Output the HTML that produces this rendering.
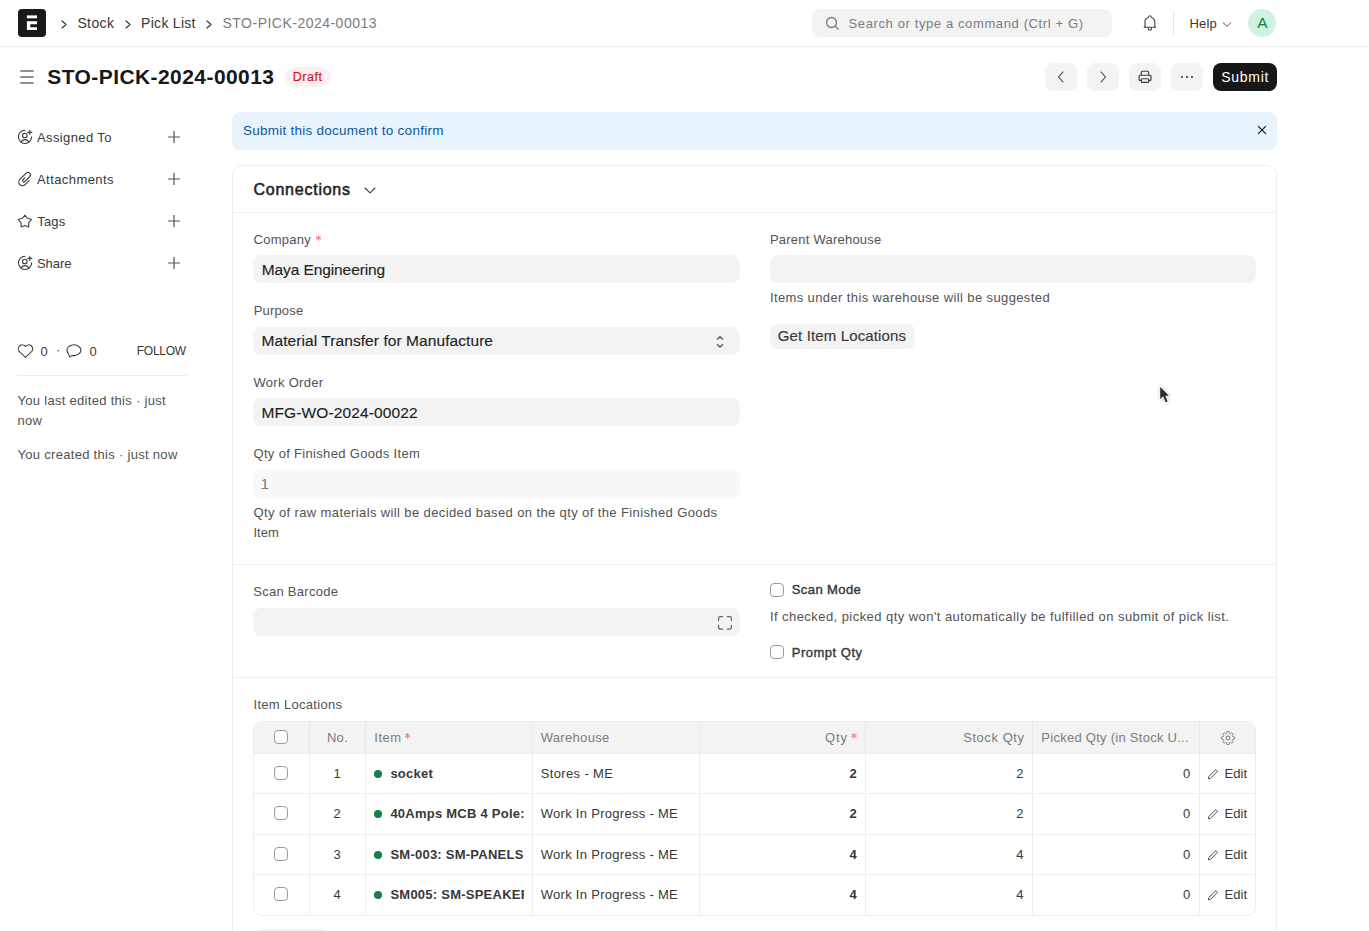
<!DOCTYPE html>
<html><head><meta charset="utf-8"><style>
html,body{margin:0;padding:0;}
body{width:1369px;height:931px;overflow:hidden;background:#fff;position:relative;font-family:"Liberation Sans",sans-serif;}
.t{position:absolute;white-space:nowrap;line-height:1;}
.b{position:absolute;}
svg.b{overflow:visible;}
</style></head><body>
<div class="b" style="left:0px;top:46px;width:1369px;height:1px;background:#ededed"></div>
<div class="b" style="left:18px;top:9px;width:28px;height:28px;background:#1a1a1a;border-radius:4px"></div>
<svg class="b" style="left:26px;top:15px" width="12" height="16" viewBox="0 0 12 16"><rect x="0.9" y="0.4" width="10.1" height="2.9" fill="#fff"/><path d="M0.9 6.3H11V9.2H4.3V12.3H11V15H0.9Z" fill="#fff"/></svg>
<svg class="b" style="left:61px;top:19.5px" width="6" height="9" viewBox="0 0 6 9"><path d="M1 1L5 4.5L1 8" fill="none" stroke="#383838" stroke-width="1.2" stroke-linecap="round" stroke-linejoin="round"/></svg>
<div class="t" style="left:77.40px;top:15.8px;font-size:14px;color:#383838;letter-spacing:0.389px;">Stock</div>
<svg class="b" style="left:125px;top:19.5px" width="6" height="9" viewBox="0 0 6 9"><path d="M1 1L5 4.5L1 8" fill="none" stroke="#383838" stroke-width="1.2" stroke-linecap="round" stroke-linejoin="round"/></svg>
<div class="t" style="left:141.10px;top:15.8px;font-size:14px;color:#383838;letter-spacing:0.285px;">Pick List</div>
<svg class="b" style="left:206px;top:19.5px" width="6" height="9" viewBox="0 0 6 9"><path d="M1 1L5 4.5L1 8" fill="none" stroke="#383838" stroke-width="1.2" stroke-linecap="round" stroke-linejoin="round"/></svg>
<div class="t" style="left:222.50px;top:15.8px;font-size:14px;color:#7c7c7c;letter-spacing:0.485px;">STO-PICK-2024-00013</div>
<div class="b" style="left:812px;top:9px;width:300px;height:28px;background:#f3f3f3;border-radius:8px"></div>
<svg class="b" style="left:825px;top:16px" width="15" height="15" viewBox="0 0 15 15"><circle cx="6.5" cy="6.5" r="5" fill="none" stroke="#7c7c7c" stroke-width="1.3"/><path d="M10.2 10.2L13.3 13.3" stroke="#7c7c7c" stroke-width="1.3" stroke-linecap="round"/></svg>
<div class="t" style="left:848.50px;top:16.8px;font-size:13px;color:#7c7c7c;letter-spacing:0.618px;">Search or type a command (Ctrl + G)</div>
<svg class="b" style="left:1142px;top:14px" width="16" height="18" viewBox="0 0 16 18"><g fill="none" stroke="#404040" stroke-width="1.1" stroke-linejoin="round"><path d="M2.2 13.2L3 12.4V7.8C3 5.6 4.4 4.2 6.3 3.6C6.6 2.5 7.2 1.7 7.9 1.7C8.6 1.7 9.2 2.5 9.5 3.6C11.4 4.2 12.8 5.6 12.8 7.8V12.4L13.6 13.2Z"/><path d="M6.4 13.4V15.2Q6.4 16 7.2 16H8.6Q9.4 16 9.4 15.2V13.4"/></g></svg>
<div class="b" style="left:1173px;top:11px;width:1px;height:24px;background:#e2e2e2"></div>
<div class="t" style="left:1189.40px;top:17.3px;font-size:13px;color:#383838;letter-spacing:0.220px;">Help</div>
<svg class="b" style="left:1222px;top:21px" width="10" height="7" viewBox="0 0 10 7"><path d="M1.2 1.8L5 5.3L8.8 1.8" fill="none" stroke="#525252" stroke-width="1" stroke-linecap="round" stroke-linejoin="round"/></svg>
<div class="b" style="left:1248px;top:9px;width:28px;height:28px;background:#cff3e0;border-radius:50%"></div>
<div class="t" style="left:1257.30px;top:15px;font-size:15.5px;color:#157a4e;">A</div>
<svg class="b" style="left:19px;top:69px" width="17" height="16" viewBox="0 0 17 16"><path d="M1.3 2H14.7M1.3 8H14.7M1.3 14H14.7" stroke="#6e6e6e" stroke-width="1.3"/></svg>
<div class="t" style="left:47.20px;top:66px;font-size:21px;color:#171717;letter-spacing:0.431px;font-weight:bold;">STO-PICK-2024-00013</div>
<div class="b" style="left:285px;top:67px;width:46px;height:20px;background:#fff0f0;border-radius:10px"></div>
<div class="t" style="left:292.70px;top:71px;font-size:12.5px;color:#d0142c;letter-spacing:0.578px;-webkit-text-stroke:0.2px currentColor;">Draft</div>
<div class="b" style="left:1045px;top:63px;width:32px;height:28px;background:#f3f3f3;border-radius:8px"></div>
<div class="b" style="left:1087px;top:63px;width:32px;height:28px;background:#f3f3f3;border-radius:8px"></div>
<div class="b" style="left:1129px;top:63px;width:32px;height:28px;background:#f3f3f3;border-radius:8px"></div>
<div class="b" style="left:1171px;top:63px;width:32px;height:28px;background:#f3f3f3;border-radius:8px"></div>
<div class="b" style="left:1213px;top:63px;width:64px;height:28px;background:#171717;border-radius:8px"></div>
<svg class="b" style="left:1056px;top:70px" width="10" height="14" viewBox="0 0 10 14"><path d="M7 2L2.5 7L7 12" fill="none" stroke="#383838" stroke-width="1.05" stroke-linecap="round" stroke-linejoin="round"/></svg>
<svg class="b" style="left:1098px;top:70px" width="10" height="14" viewBox="0 0 10 14"><path d="M3 2L7.5 7L3 12" fill="none" stroke="#383838" stroke-width="1.05" stroke-linecap="round" stroke-linejoin="round"/></svg>
<svg class="b" style="left:1137px;top:70px" width="16" height="14" viewBox="0 0 16 14"><g fill="none" stroke="#383838" stroke-width="1.1" stroke-linejoin="round"><path d="M4.3 5.3V2.3Q4.3 1.3 5.3 1.3H10.7Q11.7 1.3 11.7 2.3V5.3"/><path d="M4.3 10.4H3.1Q2.1 10.4 2.1 9.4V6.3Q2.1 5.3 3.1 5.3H13Q14 5.3 14 6.3V9.4Q14 10.4 13 10.4H11.7"/><rect x="4.3" y="8.8" width="7.4" height="3.6" rx="1"/></g></svg>
<svg class="b" style="left:1180px;top:75px" width="14" height="4" viewBox="0 0 14 4"><circle cx="2" cy="2" r="1.1" fill="#383838"/><circle cx="7" cy="2" r="1.1" fill="#383838"/><circle cx="12" cy="2" r="1.1" fill="#383838"/></svg>
<div class="t" style="left:1221.30px;top:70px;font-size:14px;color:#ffffff;letter-spacing:0.706px;">Submit</div>
<svg class="b" style="left:17px;top:129px" width="16" height="16" viewBox="0 0 16 16"><g fill="none" stroke="#383838" stroke-width="1.1" stroke-linecap="round"><path d="M8.05 1.25A6.6 6.6 0 1 0 14.65 7.85"/><path d="M12.75 1.4V5.4M10.75 3.4H14.75"/><circle cx="7.8" cy="6.5" r="2.3"/><path d="M4 12.7Q7.95 8.6 11.9 12.7"/></g></svg>
<div class="t" style="left:37.00px;top:131px;font-size:13px;color:#383838;letter-spacing:0.381px;">Assigned To</div>
<svg class="b" style="left:167px;top:130px" width="14" height="14" viewBox="0 0 14 14"><path d="M7 1V13M1 7H13" stroke="#525252" stroke-width="1.2"/></svg>
<svg class="b" style="left:16px;top:170px" width="16" height="16" viewBox="0 0 16 16"><path d="M13.08 10.66L9.12 14.62A3.7 3.7 0 0 1 3.88 9.38L10.18 3.09A2.5 2.5 0 0 1 13.71 6.63L8.83 11.51A1.3 1.3 0 0 1 6.99 9.67L8.83 7.83" fill="none" stroke="#383838" stroke-width="1.1" stroke-linecap="round" stroke-linejoin="round"/></svg>
<div class="t" style="left:37.00px;top:173.1px;font-size:13px;color:#383838;letter-spacing:0.425px;">Attachments</div>
<svg class="b" style="left:167px;top:172px" width="14" height="14" viewBox="0 0 14 14"><path d="M7 1V13M1 7H13" stroke="#525252" stroke-width="1.2"/></svg>
<svg class="b" style="left:17px;top:213px" width="16" height="16" viewBox="0 0 16 16"><path d="M7.9 2.2L10.1 5L14.6 6.5L11.7 9.9L11.6 13.9L7.9 12.4L4.2 13.9L4.1 9.9L1.2 6.5L5.7 5Z" fill="none" stroke="#404040" stroke-width="1.1" stroke-linejoin="round"/></svg>
<div class="t" style="left:37.30px;top:214.7px;font-size:13px;color:#383838;letter-spacing:0.148px;">Tags</div>
<svg class="b" style="left:167px;top:214px" width="14" height="14" viewBox="0 0 14 14"><path d="M7 1V13M1 7H13" stroke="#525252" stroke-width="1.2"/></svg>
<svg class="b" style="left:17px;top:255px" width="16" height="16" viewBox="0 0 16 16"><g fill="none" stroke="#383838" stroke-width="1.1" stroke-linecap="round"><path d="M8.05 1.25A6.6 6.6 0 1 0 14.65 7.85"/><path d="M12.75 1.4V5.4M10.75 3.4H14.75"/><circle cx="7.8" cy="6.5" r="2.3"/><path d="M4 12.7Q7.95 8.6 11.9 12.7"/></g></svg>
<div class="t" style="left:37.00px;top:256.7px;font-size:13px;color:#383838;letter-spacing:-0.046px;">Share</div>
<svg class="b" style="left:167px;top:256px" width="14" height="14" viewBox="0 0 14 14"><path d="M7 1V13M1 7H13" stroke="#525252" stroke-width="1.2"/></svg>
<svg class="b" style="left:17px;top:344px" width="17" height="15" viewBox="0 0 17 15"><path d="M8.5 13.4L2.2 7.4A3.6 3.6 0 0 1 8.5 2.4A3.6 3.6 0 0 1 14.8 7.4Z" fill="none" stroke="#404040" stroke-width="1.05" stroke-linejoin="round"/></svg>
<div class="t" style="left:40.50px;top:344.9px;font-size:13px;color:#383838;">0</div>
<div class="t" style="left:56.00px;top:343px;font-size:13px;color:#383838;">·</div>
<svg class="b" style="left:66px;top:344px" width="17" height="15" viewBox="0 0 17 15"><path d="M6.09 11.42A7 5.4 0 1 0 2.54 9.67L3.8 13.1Z" fill="none" stroke="#404040" stroke-width="1.05" stroke-linejoin="round"/></svg>
<div class="t" style="left:89.40px;top:344.9px;font-size:13px;color:#383838;">0</div>
<div class="t" style="left:136.70px;top:344.8px;font-size:12px;color:#383838;letter-spacing:-0.235px;">FOLLOW</div>
<div class="b" style="left:17px;top:375px;width:170px;height:1px;background:#ededed"></div>
<div class="t" style="left:17.50px;top:393.7px;font-size:13px;color:#525252;letter-spacing:0.295px;">You last edited this · just</div>
<div class="t" style="left:17.50px;top:413.7px;font-size:13px;color:#525252;letter-spacing:0.250px;">now</div>
<div class="t" style="left:17.50px;top:447.8px;font-size:13px;color:#525252;letter-spacing:0.299px;">You created this · just now</div>
<div class="b" style="left:232px;top:112px;width:1045px;height:38px;background:#e8f4fd;border-radius:8px"></div>
<div class="t" style="left:242.90px;top:123.9px;font-size:13.5px;color:#0a56a3;letter-spacing:0.256px;">Submit this document to confirm</div>
<svg class="b" style="left:1256px;top:124px" width="12" height="12" viewBox="0 0 12 12"><path d="M2.35 2.35L9.65 9.65M9.65 2.35L2.35 9.65" stroke="#171717" stroke-width="1.2" stroke-linecap="round"/></svg>
<div class="b" style="left:232px;top:165px;width:1043px;height:900px;border:1px solid #ededed;border-radius:10px"></div>
<div class="t" style="left:253.50px;top:181.7px;font-size:16px;color:#1f1f1f;letter-spacing:0.756px;-webkit-text-stroke:0.55px currentColor;">Connections</div>
<svg class="b" style="left:363px;top:186px" width="14" height="9" viewBox="0 0 14 9"><path d="M2 2L7 6.8L12 2" fill="none" stroke="#383838" stroke-width="1.05" stroke-linecap="round" stroke-linejoin="round"/></svg>
<div class="b" style="left:233px;top:212px;width:1043px;height:1px;background:#ededed"></div>
<div class="t" style="left:253.50px;top:232.7px;font-size:13px;color:#525252;letter-spacing:0.260px;">Company</div>
<svg class="b" style="left:0;top:0" width="1" height="1"><path d="M318.50 235.45L318.50 240.35M316.38 236.68L320.62 239.12M320.62 236.68L316.38 239.12" stroke="#f7808e" stroke-width="1.05" stroke-linecap="round"/></svg>
<div class="b" style="left:253px;top:255px;width:487px;height:28px;background:#f3f3f3;border-radius:8px"></div>
<div class="t" style="left:261.80px;top:261.8px;font-size:15.5px;color:#1f1f1f;letter-spacing:-0.103px;-webkit-text-stroke:0.15px currentColor;">Maya Engineering</div>
<div class="t" style="left:253.70px;top:303.8px;font-size:13px;color:#525252;letter-spacing:0.179px;">Purpose</div>
<div class="b" style="left:253px;top:327px;width:487px;height:28px;background:#f3f3f3;border-radius:8px"></div>
<div class="t" style="left:261.50px;top:332.7px;font-size:15.5px;color:#1f1f1f;letter-spacing:0.073px;-webkit-text-stroke:0.15px currentColor;">Material Transfer for Manufacture</div>
<svg class="b" style="left:715px;top:334px" width="10" height="16" viewBox="0 0 10 16"><path d="M2.4 5.2L5 2.6L7.6 5.2M2.4 10.6L5 13.2L7.6 10.6" fill="none" stroke="#383838" stroke-width="1.15" stroke-linecap="round" stroke-linejoin="round"/></svg>
<div class="t" style="left:253.50px;top:376.3px;font-size:13px;color:#525252;letter-spacing:0.285px;">Work Order</div>
<div class="b" style="left:253px;top:398px;width:487px;height:28px;background:#f3f3f3;border-radius:8px"></div>
<div class="t" style="left:261.50px;top:405px;font-size:15.5px;color:#1f1f1f;letter-spacing:0.119px;-webkit-text-stroke:0.15px currentColor;">MFG-WO-2024-00022</div>
<div class="t" style="left:253.50px;top:447px;font-size:13px;color:#525252;letter-spacing:0.323px;">Qty of Finished Goods Item</div>
<div class="b" style="left:253px;top:470px;width:487px;height:28px;background:#f8f8f8;border-radius:8px"></div>
<div class="t" style="left:260.50px;top:476px;font-size:15.5px;color:#7c7c7c;">1</div>
<div class="t" style="left:253.50px;top:506px;font-size:13px;color:#525252;letter-spacing:0.385px;">Qty of raw materials will be decided based on the qty of the Finished Goods</div>
<div class="t" style="left:253.50px;top:525.9px;font-size:13px;color:#525252;letter-spacing:0.005px;">Item</div>
<div class="t" style="left:769.90px;top:233px;font-size:13px;color:#525252;letter-spacing:0.232px;">Parent Warehouse</div>
<div class="b" style="left:770px;top:255px;width:486px;height:28px;background:#f3f3f3;border-radius:8px"></div>
<div class="t" style="left:769.90px;top:290.7px;font-size:13px;color:#525252;letter-spacing:0.388px;">Items under this warehouse will be suggested</div>
<div class="b" style="left:770px;top:324px;width:145px;height:25px;background:#f3f3f3;border-radius:8px"></div>
<div class="t" style="left:777.80px;top:328.1px;font-size:15px;color:#383838;letter-spacing:0.136px;-webkit-text-stroke:0.15px currentColor;">Get Item Locations</div>
<div class="b" style="left:233px;top:564px;width:1043px;height:1px;background:#ededed"></div>
<div class="t" style="left:253.30px;top:585px;font-size:13px;color:#525252;letter-spacing:0.267px;">Scan Barcode</div>
<div class="b" style="left:253px;top:608px;width:487px;height:28px;background:#f3f3f3;border-radius:8px"></div>
<svg class="b" style="left:717px;top:615px" width="16" height="16" viewBox="0 0 16 16"><path d="M1.6 5.6V3.3A1.7 1.7 0 0 1 3.3 1.6H5.6M10.4 1.6H12.7A1.7 1.7 0 0 1 14.4 3.3V5.6M14.4 10.3V12.5A1.7 1.7 0 0 1 12.7 14.2H10.4M5.6 14.2H3.3A1.7 1.7 0 0 1 1.6 12.5V10.3" fill="none" stroke="#666" stroke-width="1.25" stroke-linecap="round"/></svg>
<div class="b" style="left:770px;top:583px;width:14px;height:14px;box-sizing:border-box;border:1px solid #9a9a9a;border-radius:4px;background:#fff"></div>
<div class="t" style="left:791.80px;top:582.8px;font-size:13px;color:#383838;letter-spacing:0.404px;-webkit-text-stroke:0.4px currentColor;">Scan Mode</div>
<div class="t" style="left:769.90px;top:609.8px;font-size:13px;color:#525252;letter-spacing:0.444px;">If checked, picked qty won't automatically be fulfilled on submit of pick list.</div>
<div class="b" style="left:770px;top:645px;width:14px;height:14px;box-sizing:border-box;border:1px solid #9a9a9a;border-radius:4px;background:#fff"></div>
<div class="t" style="left:791.80px;top:645.6px;font-size:13px;color:#383838;letter-spacing:0.495px;-webkit-text-stroke:0.4px currentColor;">Prompt Qty</div>
<div class="b" style="left:233px;top:677px;width:1043px;height:1px;background:#ededed"></div>
<div class="t" style="left:253.50px;top:698.3px;font-size:13px;color:#525252;letter-spacing:0.305px;">Item Locations</div>
<div class="b" style="left:253px;top:721px;width:1003px;height:194.5px;box-sizing:border-box;border:1px solid #ededed;border-radius:9px;overflow:hidden"></div>
<div class="b" style="left:254px;top:722px;width:1001px;height:32px;background:#f3f3f3;border-radius:8px 8px 0 0"></div>
<div class="b" style="left:254px;top:753px;width:1001px;height:1px;background:#ededed"></div>
<div class="b" style="left:254px;top:793px;width:1001px;height:1px;background:#ededed"></div>
<div class="b" style="left:254px;top:834px;width:1001px;height:1px;background:#ededed"></div>
<div class="b" style="left:254px;top:874px;width:1001px;height:1px;background:#ededed"></div>
<div class="b" style="left:309px;top:722px;width:1px;height:31px;background:#e8e8e8"></div>
<div class="b" style="left:309px;top:754px;width:1px;height:38px;background:#ededed"></div>
<div class="b" style="left:309px;top:794px;width:1px;height:39px;background:#ededed"></div>
<div class="b" style="left:309px;top:835px;width:1px;height:38px;background:#ededed"></div>
<div class="b" style="left:309px;top:875px;width:1px;height:39px;background:#ededed"></div>
<div class="b" style="left:365px;top:722px;width:1px;height:31px;background:#e8e8e8"></div>
<div class="b" style="left:365px;top:754px;width:1px;height:38px;background:#ededed"></div>
<div class="b" style="left:365px;top:794px;width:1px;height:39px;background:#ededed"></div>
<div class="b" style="left:365px;top:835px;width:1px;height:38px;background:#ededed"></div>
<div class="b" style="left:365px;top:875px;width:1px;height:39px;background:#ededed"></div>
<div class="b" style="left:532px;top:722px;width:1px;height:31px;background:#e8e8e8"></div>
<div class="b" style="left:532px;top:754px;width:1px;height:38px;background:#ededed"></div>
<div class="b" style="left:532px;top:794px;width:1px;height:39px;background:#ededed"></div>
<div class="b" style="left:532px;top:835px;width:1px;height:38px;background:#ededed"></div>
<div class="b" style="left:532px;top:875px;width:1px;height:39px;background:#ededed"></div>
<div class="b" style="left:699px;top:722px;width:1px;height:31px;background:#e8e8e8"></div>
<div class="b" style="left:699px;top:754px;width:1px;height:38px;background:#ededed"></div>
<div class="b" style="left:699px;top:794px;width:1px;height:39px;background:#ededed"></div>
<div class="b" style="left:699px;top:835px;width:1px;height:38px;background:#ededed"></div>
<div class="b" style="left:699px;top:875px;width:1px;height:39px;background:#ededed"></div>
<div class="b" style="left:865px;top:722px;width:1px;height:31px;background:#e8e8e8"></div>
<div class="b" style="left:865px;top:754px;width:1px;height:38px;background:#ededed"></div>
<div class="b" style="left:865px;top:794px;width:1px;height:39px;background:#ededed"></div>
<div class="b" style="left:865px;top:835px;width:1px;height:38px;background:#ededed"></div>
<div class="b" style="left:865px;top:875px;width:1px;height:39px;background:#ededed"></div>
<div class="b" style="left:1032px;top:722px;width:1px;height:31px;background:#e8e8e8"></div>
<div class="b" style="left:1032px;top:754px;width:1px;height:38px;background:#ededed"></div>
<div class="b" style="left:1032px;top:794px;width:1px;height:39px;background:#ededed"></div>
<div class="b" style="left:1032px;top:835px;width:1px;height:38px;background:#ededed"></div>
<div class="b" style="left:1032px;top:875px;width:1px;height:39px;background:#ededed"></div>
<div class="b" style="left:1199px;top:722px;width:1px;height:31px;background:#e8e8e8"></div>
<div class="b" style="left:1199px;top:754px;width:1px;height:38px;background:#ededed"></div>
<div class="b" style="left:1199px;top:794px;width:1px;height:39px;background:#ededed"></div>
<div class="b" style="left:1199px;top:835px;width:1px;height:38px;background:#ededed"></div>
<div class="b" style="left:1199px;top:875px;width:1px;height:39px;background:#ededed"></div>
<div class="b" style="left:274px;top:730px;width:14px;height:14px;box-sizing:border-box;border:1px solid #9a9a9a;border-radius:4px;background:#fff"></div>
<div class="t" style="left:327.00px;top:731.4px;font-size:13px;color:#7c7c7c;letter-spacing:0.186px;">No.</div>
<div class="t" style="left:374.30px;top:731.4px;font-size:13px;color:#7c7c7c;letter-spacing:0.472px;">Item</div>
<svg class="b" style="left:0;top:0" width="1" height="1"><path d="M407.50 733.25L407.50 738.15M405.38 734.48L409.62 736.93M409.62 734.48L405.38 736.93" stroke="#f7808e" stroke-width="1.05" stroke-linecap="round"/></svg>
<div class="t" style="left:540.70px;top:731.4px;font-size:13px;color:#7c7c7c;letter-spacing:0.325px;">Warehouse</div>
<div class="t" style="left:825.00px;top:731.4px;font-size:13px;color:#7c7c7c;letter-spacing:0.886px;">Qty</div>
<svg class="b" style="left:0;top:0" width="1" height="1"><path d="M854.00 733.25L854.00 738.15M851.88 734.48L856.12 736.93M856.12 734.48L851.88 736.93" stroke="#f7808e" stroke-width="1.05" stroke-linecap="round"/></svg>
<div class="t" style="left:963.20px;top:731.4px;font-size:13px;color:#7c7c7c;letter-spacing:0.557px;">Stock Qty</div>
<div class="t" style="left:1041.30px;top:731.4px;font-size:13px;color:#7c7c7c;letter-spacing:0.268px;">Picked Qty (in Stock U...</div>
<svg class="b" style="left:1220px;top:730px" width="16" height="16" viewBox="0 0 16 16"><path d="M6.92 1.49L9.08 1.49L9.13 3.13L10.65 3.76L11.84 2.63L13.37 4.16L12.24 5.35L12.87 6.87L14.51 6.92L14.51 9.08L12.87 9.13L12.24 10.65L13.37 11.84L11.84 13.37L10.65 12.24L9.13 12.87L9.08 14.51L6.92 14.51L6.87 12.87L5.35 12.24L4.16 13.37L2.63 11.84L3.76 10.65L3.13 9.13L1.49 9.08L1.49 6.92L3.13 6.87L3.76 5.35L2.63 4.16L4.16 2.63L5.35 3.76L6.87 3.13Z" fill="none" stroke="#8a8a8a" stroke-width="1" stroke-linejoin="round"/><circle cx="8" cy="8" r="1.9" fill="none" stroke="#8a8a8a" stroke-width="1.1"/></svg>
<div class="b" style="left:274px;top:766px;width:14px;height:14px;box-sizing:border-box;border:1px solid #9a9a9a;border-radius:4px;background:#fff"></div>
<div class="t" style="left:333.50px;top:767px;font-size:13px;color:#383838;">1</div>
<div class="b" style="left:374px;top:769.7px;width:8px;height:8px;background:#13804a;border-radius:50%"></div>
<div class="b" style="left:386px;top:758px;width:138px;height:26px;overflow:hidden">
<div class="t" style="left:4.40px;top:9px;font-size:13px;color:#383838;letter-spacing:0.243px;font-weight:bold;">socket</div>
</div>
<div class="t" style="left:540.70px;top:767px;font-size:13px;color:#383838;letter-spacing:0.367px;">Stores - ME</div>
<div class="t" style="left:849.50px;top:767px;font-size:13px;color:#383838;font-weight:bold;">2</div>
<div class="t" style="left:1016.30px;top:767px;font-size:13px;color:#383838;">2</div>
<div class="t" style="left:1183.00px;top:767px;font-size:13px;color:#383838;">0</div>
<svg class="b" style="left:1207px;top:768px" width="12" height="12" viewBox="0 0 12 12"><path d="M8.9 1.6L10.6 3.3L3.6 10.3L1.3 10.8L1.8 8.5Z" fill="none" stroke="#404040" stroke-width="0.95" stroke-linejoin="round"/></svg>
<div class="t" style="left:1224.50px;top:767px;font-size:13px;color:#383838;letter-spacing:0.100px;">Edit</div>
<div class="b" style="left:274px;top:806px;width:14px;height:14px;box-sizing:border-box;border:1px solid #9a9a9a;border-radius:4px;background:#fff"></div>
<div class="t" style="left:333.50px;top:807px;font-size:13px;color:#383838;">2</div>
<div class="b" style="left:374px;top:810.2px;width:8px;height:8px;background:#13804a;border-radius:50%"></div>
<div class="b" style="left:386px;top:798px;width:138px;height:26px;overflow:hidden">
<div class="t" style="left:4.40px;top:9px;font-size:13px;color:#383838;letter-spacing:0.243px;font-weight:bold;">40Amps MCB 4 Pole: 40Amps MCB 4 Pole</div>
</div>
<div class="t" style="left:540.70px;top:807px;font-size:13px;color:#383838;letter-spacing:0.293px;">Work In Progress - ME</div>
<div class="t" style="left:849.50px;top:807px;font-size:13px;color:#383838;font-weight:bold;">2</div>
<div class="t" style="left:1016.30px;top:807px;font-size:13px;color:#383838;">2</div>
<div class="t" style="left:1183.00px;top:807px;font-size:13px;color:#383838;">0</div>
<svg class="b" style="left:1207px;top:808px" width="12" height="12" viewBox="0 0 12 12"><path d="M8.9 1.6L10.6 3.3L3.6 10.3L1.3 10.8L1.8 8.5Z" fill="none" stroke="#404040" stroke-width="0.95" stroke-linejoin="round"/></svg>
<div class="t" style="left:1224.50px;top:807px;font-size:13px;color:#383838;letter-spacing:0.100px;">Edit</div>
<div class="b" style="left:274px;top:847px;width:14px;height:14px;box-sizing:border-box;border:1px solid #9a9a9a;border-radius:4px;background:#fff"></div>
<div class="t" style="left:333.50px;top:848px;font-size:13px;color:#383838;">3</div>
<div class="b" style="left:374px;top:850.5px;width:8px;height:8px;background:#13804a;border-radius:50%"></div>
<div class="b" style="left:386px;top:839px;width:138px;height:26px;overflow:hidden">
<div class="t" style="left:4.40px;top:9px;font-size:13px;color:#383838;letter-spacing:0.243px;font-weight:bold;">SM-003: SM-PANELS</div>
</div>
<div class="t" style="left:540.70px;top:848px;font-size:13px;color:#383838;letter-spacing:0.293px;">Work In Progress - ME</div>
<div class="t" style="left:849.50px;top:848px;font-size:13px;color:#383838;font-weight:bold;">4</div>
<div class="t" style="left:1016.30px;top:848px;font-size:13px;color:#383838;">4</div>
<div class="t" style="left:1183.00px;top:848px;font-size:13px;color:#383838;">0</div>
<svg class="b" style="left:1207px;top:849px" width="12" height="12" viewBox="0 0 12 12"><path d="M8.9 1.6L10.6 3.3L3.6 10.3L1.3 10.8L1.8 8.5Z" fill="none" stroke="#404040" stroke-width="0.95" stroke-linejoin="round"/></svg>
<div class="t" style="left:1224.50px;top:848px;font-size:13px;color:#383838;letter-spacing:0.100px;">Edit</div>
<div class="b" style="left:274px;top:887px;width:14px;height:14px;box-sizing:border-box;border:1px solid #9a9a9a;border-radius:4px;background:#fff"></div>
<div class="t" style="left:333.50px;top:888px;font-size:13px;color:#383838;">4</div>
<div class="b" style="left:374px;top:890.8px;width:8px;height:8px;background:#13804a;border-radius:50%"></div>
<div class="b" style="left:386px;top:879px;width:138px;height:26px;overflow:hidden">
<div class="t" style="left:4.40px;top:9px;font-size:13px;color:#383838;letter-spacing:0.243px;font-weight:bold;">SM005: SM-SPEAKER</div>
</div>
<div class="t" style="left:540.70px;top:888px;font-size:13px;color:#383838;letter-spacing:0.293px;">Work In Progress - ME</div>
<div class="t" style="left:849.50px;top:888px;font-size:13px;color:#383838;font-weight:bold;">4</div>
<div class="t" style="left:1016.30px;top:888px;font-size:13px;color:#383838;">4</div>
<div class="t" style="left:1183.00px;top:888px;font-size:13px;color:#383838;">0</div>
<svg class="b" style="left:1207px;top:889px" width="12" height="12" viewBox="0 0 12 12"><path d="M8.9 1.6L10.6 3.3L3.6 10.3L1.3 10.8L1.8 8.5Z" fill="none" stroke="#404040" stroke-width="0.95" stroke-linejoin="round"/></svg>
<div class="t" style="left:1224.50px;top:888px;font-size:13px;color:#383838;letter-spacing:0.100px;">Edit</div>
<div class="b" style="left:256px;top:929px;width:71px;height:10px;background:#f3f3f3;border-radius:8px"></div>
<svg class="b" style="left:1155px;top:382px;filter:drop-shadow(0 0.5px 1px rgba(0,0,0,0.3))" width="20" height="24" viewBox="0 0 20 24"><path d="M5.2 4.9V17L8.2 14.3L10.6 20.2L12.6 19.4L10.3 13.8H14Z" fill="#2a2a2a" stroke="#fff" stroke-width="2" stroke-linejoin="round" paint-order="stroke"/></svg>
</body></html>
